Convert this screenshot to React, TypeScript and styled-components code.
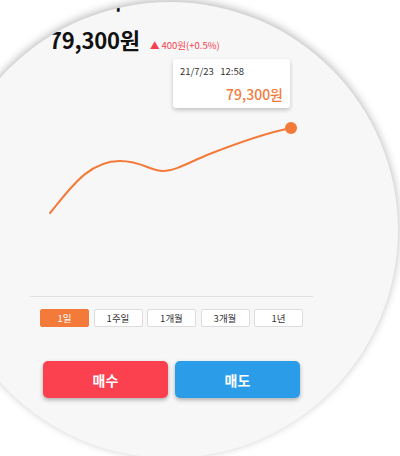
import React from 'react'
import styled, { createGlobalStyle } from 'styled-components'

const GlobalStyle = createGlobalStyle`
  html, body {
    margin: 0;
    padding: 0;
    background: #ffffff;
    overflow: hidden;
  }
  body {
    font-family: 'Noto Sans CJK KR', 'Noto Sans', sans-serif;
  }
`

const Page = styled.div`
  width: 400px;
  height: 456px;
  overflow: hidden;
  background: #fff;
`

const Lens = styled.div`
  width: 456px;
  height: 456px;
  margin: 2px 0 0 -58px;
  border-radius: 50%;
  background: #f7f7f7;
  box-shadow: 0 -2px 8px rgba(0, 0, 0, 0.28);
  overflow: hidden;
`

const Screen = styled.div`
  width: 283px;
  margin-left: 88px;
  display: flex;
  flex-direction: column;
`

const Header = styled.div`
  padding-left: 19px;
  margin-top: -12px;
`

const Title = styled.div`
  font-size: 20px;
  line-height: 24px;
  font-weight: 700;
  color: #111;
`

const PriceRow = styled.div`
  display: flex;
  align-items: baseline;
  gap: 10px;
  margin-top: 12px;
`

const Price = styled.div`
  font-size: 22px;
  line-height: 26px;
  font-weight: 700;
  color: #111;
  letter-spacing: -0.2px;
`

const Change = styled.div`
  font-size: 9.5px;
  color: #f5414f;
`

const ChartArea = styled.div`
  position: relative;
  height: 240px;
  margin-top: 4px;
  border-bottom: 1px solid #e2e2e2;
`

const Tooltip = styled.div`
  position: absolute;
  top: 3px;
  left: 143px;
  width: 117px;
  height: 49px;
  box-sizing: border-box;
  padding: 6px 7px 0 7px;
  background: #fff;
  border-radius: 3px;
  box-shadow: 0 2px 4px rgba(0, 0, 0, 0.22);
  display: flex;
  flex-direction: column;
`

const TipDate = styled.div`
  font-size: 9.5px;
  line-height: 12px;
  color: #333;
  white-space: pre;
`

const TipPrice = styled.div`
  margin-top: 8px;
  font-size: 14px;
  line-height: 18px;
  font-weight: 500;
  color: #f47a3a;
  text-align: right;
`

const PeriodRow = styled.div`
  display: flex;
  gap: 4.5px;
  padding-left: 10px;
  margin-top: 12px;
`

const PeriodButton = styled.button<{ $active?: boolean }>`
  width: 49px;
  height: 18px;
  padding: 0;
  box-sizing: border-box;
  border-radius: 2px;
  border: 1px solid ${(p) => (p.$active ? '#f47a3a' : '#dcdcdc')};
  background: ${(p) => (p.$active ? '#f47a3a' : '#ffffff')};
  color: ${(p) => (p.$active ? '#ffffff' : '#333333')};
  font-family: inherit;
  font-size: 9.5px;
  line-height: 16px;
`

const ActionRow = styled.div`
  display: flex;
  gap: 7px;
  padding-left: 13px;
  margin-top: 34px;
`

const ActionButton = styled.button<{ $color: string }>`
  width: 125px;
  height: 37px;
  border: none;
  border-radius: 5px;
  background: ${(p) => p.$color};
  color: #fff;
  font-family: inherit;
  font-size: 14px;
  font-weight: 700;
  box-shadow: 0 2px 4px rgba(0, 0, 0, 0.3);
`

const periods = ['1일', '1주일', '1개월', '3개월', '1년']

const App: React.FC = () => {
  return (
    <>
      <GlobalStyle />
      <Page>
        <Lens>
          <Screen>
            <Header>
              <Title>삼성전자</Title>
              <PriceRow>
                <Price>79,300원</Price>
                <Change>▲ 400원(+0.5%)</Change>
              </PriceRow>
            </Header>
            <ChartArea>
              <svg width="283" height="240" viewBox="0 0 283 240">
                <path
                  d="M20,157 C40,133 58,105 90,105 C112,105 120,115 133,115 C145,115 158,107 177,99 C205,88 235,77 261,72"
                  fill="none"
                  stroke="#f47a3a"
                  strokeWidth="2"
                  strokeLinecap="round"
                />
                <circle cx="261" cy="72" r="6" fill="#f47a3a" />
              </svg>
              <Tooltip>
                <TipDate>{'21/7/23   12:58'}</TipDate>
                <TipPrice>79,300원</TipPrice>
              </Tooltip>
            </ChartArea>
            <PeriodRow>
              {periods.map((p, i) => (
                <PeriodButton key={p} $active={i === 0}>
                  {p}
                </PeriodButton>
              ))}
            </PeriodRow>
            <ActionRow>
              <ActionButton $color="#fb4050">매수</ActionButton>
              <ActionButton $color="#2b9ce8">매도</ActionButton>
            </ActionRow>
          </Screen>
        </Lens>
      </Page>
    </>
  )
}

export default App
